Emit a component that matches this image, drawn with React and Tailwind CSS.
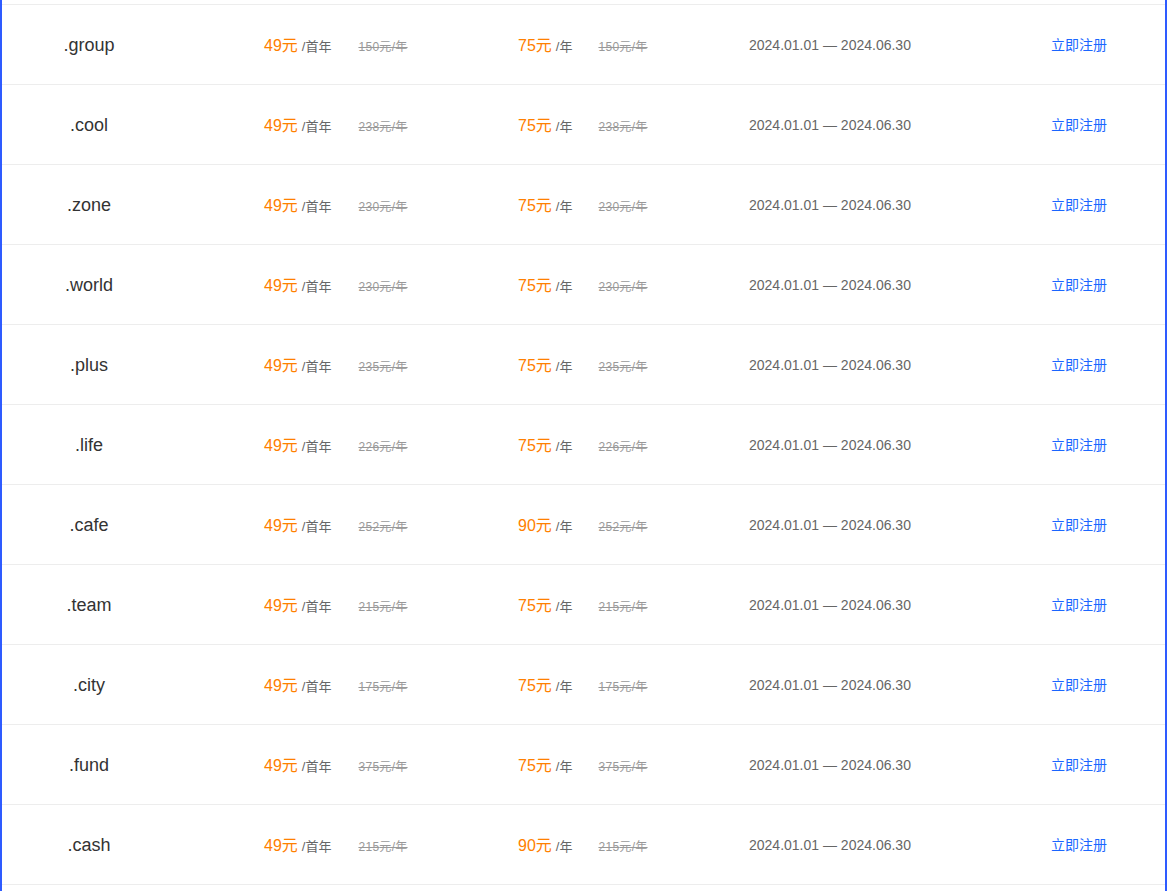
const rows = [
  { name: ".group", orig: "150", renew: "75" },
  { name: ".cool", orig: "238", renew: "75" },
  { name: ".zone", orig: "230", renew: "75" },
  { name: ".world", orig: "230", renew: "75" },
  { name: ".plus", orig: "235", renew: "75" },
  { name: ".life", orig: "226", renew: "75" },
  { name: ".cafe", orig: "252", renew: "90" },
  { name: ".team", orig: "215", renew: "75" },
  { name: ".city", orig: "175", renew: "75" },
  { name: ".fund", orig: "375", renew: "75" },
  { name: ".cash", orig: "215", renew: "90" },
];

const font = { fontFamily: '"Liberation Sans", Arial, "Noto Sans CJK SC", sans-serif' };

export default function App() {
  return (
    <div className="w-[1167px] h-[891px] overflow-hidden bg-white border-x-2 border-[#2e5bff]" style={font}>
      <div className="h-[4px]" />
      <div className="border-t border-[#ededed]">
        {rows.map((r) => (
          <div key={r.name} className="flex items-center h-[80px] pt-[2px] border-b border-[#ededed]">
            <div className="w-[174px] text-center text-[18px] text-[#333]">{r.name}</div>
            <div className="w-[342px] pl-[88px] flex items-baseline">
              <span className="text-[16px] text-[#ff8000]">49元</span>
              <span className="text-[13px] text-[#666] ml-[4px]">/首年</span>
              <span className="text-[12px] text-[#999] line-through tracking-[0.3px] ml-[27px]">{r.orig}元/年</span>
            </div>
            <div className="w-[231px] flex items-baseline">
              <span className="text-[16px] text-[#ff8000]">{r.renew}元</span>
              <span className="text-[13px] text-[#666] ml-[4px]">/年</span>
              <span className="text-[12px] text-[#999] line-through tracking-[0.3px] ml-[26px]">{r.orig}元/年</span>
            </div>
            <div className="w-[302px] text-[14px] text-[#666]">2024.01.01 — 2024.06.30</div>
            <div className="text-[14px] text-[#1a66ff]">立即注册</div>
          </div>
        ))}
      </div>
    </div>
  );
}
